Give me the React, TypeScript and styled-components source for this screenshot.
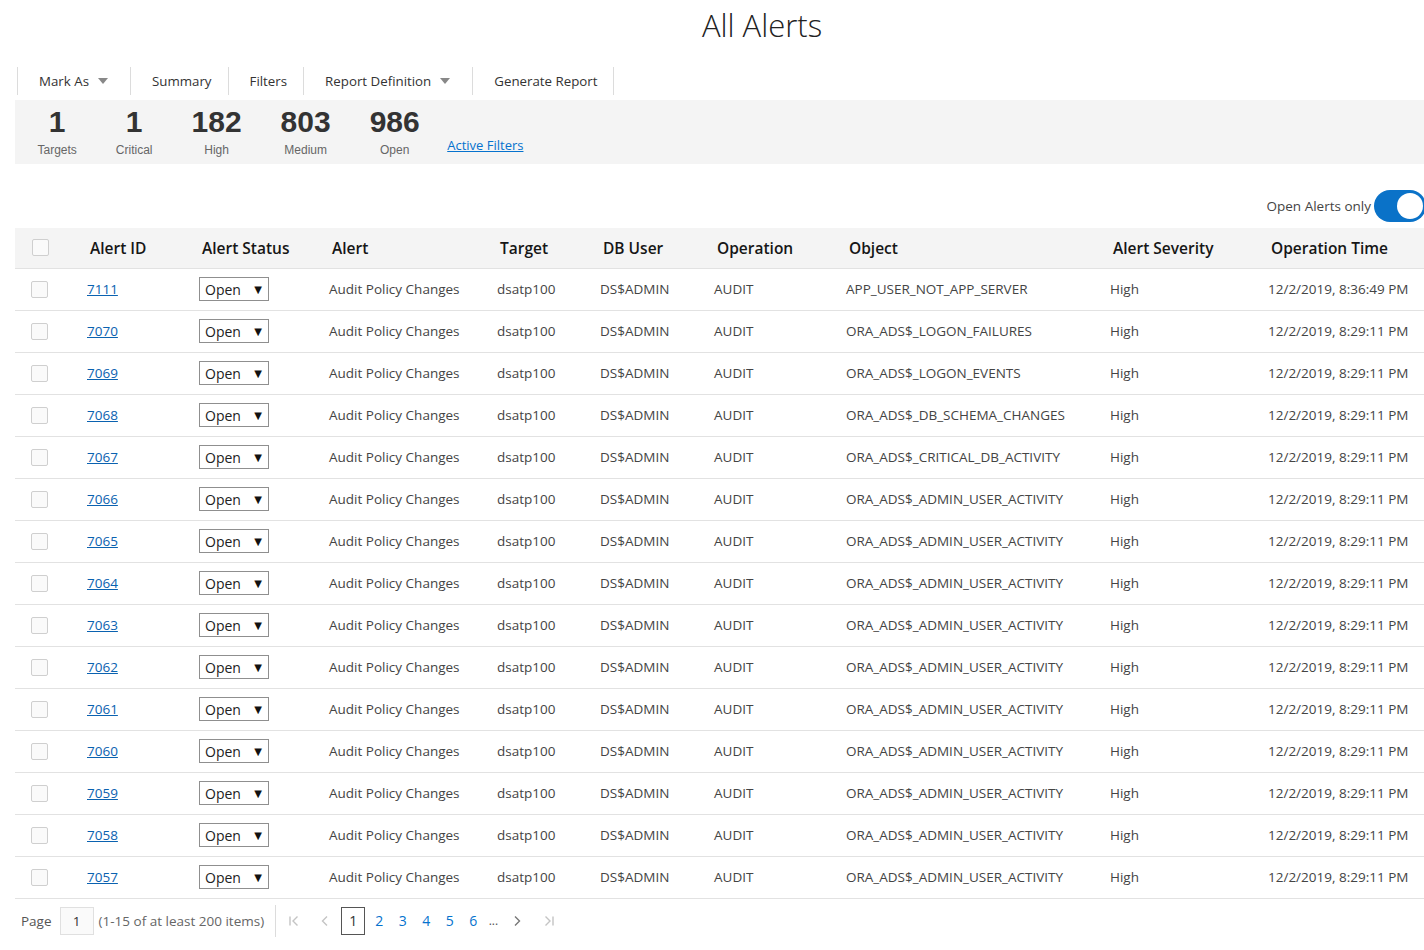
import * as React from 'react';
import styled, { createGlobalStyle } from 'styled-components';

const GlobalStyle = createGlobalStyle`
  html, body {
    margin: 0;
    padding: 0;
    background: #fff;
    overflow: hidden;
  }
  body {
    font-family: "Open Sans", "Noto Sans", "DejaVu Sans", sans-serif;
    color: #333;
  }
`;

const Page = styled.div`
  width: 1524px;
  padding: 0 15px;
  box-sizing: border-box;
`;

const Title = styled.h1`
  margin: 0;
  height: 52px;
  line-height: 50px;
  text-align: center;
  font-size: 31px;
  font-weight: 300;
  color: #222;
`;

const Toolbar = styled.div`
  display: flex;
  align-items: center;
  margin: 15px 0 5px 2px;
  height: 28px;
`;

const ToolItem = styled.div<{ $last?: boolean }>`
  display: flex;
  align-items: center;
  height: 28px;
  padding: 0 16px 0 21px;
  border-left: 1px solid #dcdcdc;
  border-right: ${(p) => (p.$last ? '1px solid #dcdcdc' : 'none')};
  font-size: 13.3px;
  color: #333;
  cursor: pointer;
`;

const Caret = styled.span`
  margin: 0 6px 0 9px;
  width: 0;
  height: 0;
  border-left: 5px solid transparent;
  border-right: 5px solid transparent;
  border-top: 6px solid #888;
`;

const SummaryBand = styled.div`
  display: flex;
  align-items: flex-start;
  height: 64px;
  padding-left: 3px;
  background: #f4f4f4;
`;

const Stat = styled.div`
  display: flex;
  flex-direction: column;
  align-items: center;
  padding: 4px 19.5px 0;
`;

const StatValue = styled.div`
  font-family: "Liberation Sans", Arial, sans-serif;
  font-weight: bold;
  font-size: 30px;
  line-height: 36px;
  color: #333;
`;

const StatLabel = styled.div`
  font-family: "Liberation Sans", Arial, sans-serif;
  font-size: 12px;
  line-height: 14px;
  margin-top: 3px;
  color: #666;
`;

const FilterLink = styled.a`
  margin: 36px 0 0 8px;
  font-size: 13px;
  color: #0572ce;
  text-decoration: underline;
  cursor: pointer;
`;

const ToggleRow = styled.div`
  display: flex;
  justify-content: flex-end;
  align-items: center;
  gap: 3px;
  margin-top: 26px;
  padding-right: 83px;
  height: 32px;
  font-size: 13.5px;
  color: #444;
`;

const Switch = styled.div`
  position: relative;
  width: 52px;
  height: 32px;
  border-radius: 16px;
  background: #0a72c8;
`;

const Knob = styled.span`
  position: absolute;
  top: 3px;
  right: 3px;
  width: 26px;
  height: 26px;
  border-radius: 50%;
  background: #fff;
`;

const Table = styled.table`
  margin-top: 6px;
  border-collapse: collapse;
  table-layout: fixed;
  width: 1421px;
`;

const Th = styled.th<{ $w: number }>`
  width: ${(p) => p.$w}px;
  height: 40px;
  padding: 0 0 0 15px;
  text-align: left;
  font-size: 15.5px;
  font-weight: 600;
  color: #161616;
  background: #f4f4f4;
  border-bottom: 1px solid #e2e2e2;
  white-space: nowrap;
  box-sizing: border-box;
`;

const CheckTh = styled(Th)`
  padding-left: 17px;
`;

const Td = styled.td`
  height: 41px;
  padding: 0 0 0 12px;
  font-size: 13.5px;
  color: #444;
  border-bottom: 1px solid #e2e2e2;
  white-space: nowrap;
`;

const CheckTd = styled(Td)`
  padding-left: 16px;
`;

const Box = styled.span`
  display: block;
  width: 15px;
  height: 15px;
  border: 1px solid #cfcfcf;
  border-radius: 2px;
  background: #fafafa;
`;

const IdLink = styled.a`
  color: #0a62b0;
  text-decoration: underline;
  cursor: pointer;
`;

const StatusSelect = styled.div`
  display: flex;
  align-items: center;
  justify-content: space-between;
  width: 70px;
  height: 24px;
  box-sizing: border-box;
  padding: 0 6px 0 5px;
  border: 1px solid #8f8f8f;
  font-size: 14px;
  color: #222;
  background: #fff;
`;

const SelectArrow = styled.span`
  font-size: 10px;
  color: #111;
`;

const Pager = styled.div`
  display: flex;
  align-items: center;
  height: 44px;
  padding-left: 6px;
  font-size: 13.5px;
  color: #555;
`;

const PageInput = styled.div`
  width: 34px;
  height: 28px;
  margin: 0 5px 0 8px;
  box-sizing: border-box;
  display: flex;
  align-items: center;
  justify-content: center;
  border: 1px solid #e0e0e0;
  background: #fafafa;
  color: #333;
`;

const PagerInfo = styled.span`
  color: #666;
  padding-right: 11px;
  border-right: 1px solid #dcdcdc;
  line-height: 32px;
`;

const NavIcon = styled.span<{ $disabled?: boolean; $gap: number }>`
  display: flex;
  align-items: center;
  justify-content: center;
  width: 12px;
  height: 28px;
  margin-left: ${(p) => p.$gap}px;
  color: ${(p) => (p.$disabled ? '#c4c4c4' : '#777')};
`;

const CurrentPage = styled.span`
  display: flex;
  align-items: center;
  justify-content: center;
  width: 24px;
  height: 28px;
  box-sizing: border-box;
  margin: 0 6px 0 10px;
  border: 1px solid #555;
  color: #333;
  font-size: 14px;
`;

const PageNum = styled.span`
  display: flex;
  align-items: center;
  justify-content: center;
  width: 16px;
  height: 28px;
  margin-right: 7.5px;
  color: #0572ce;
  font-size: 14px;
`;

const Ellipsis = styled.span`
  width: 10px;
  font-size: 12px;
  color: #555;
`;

const columns = [
  { key: 'check', label: '', w: 60 },
  { key: 'id', label: 'Alert ID', w: 112 },
  { key: 'status', label: 'Alert Status', w: 130 },
  { key: 'alert', label: 'Alert', w: 168 },
  { key: 'target', label: 'Target', w: 103 },
  { key: 'user', label: 'DB User', w: 114 },
  { key: 'op', label: 'Operation', w: 132 },
  { key: 'object', label: 'Object', w: 264 },
  { key: 'severity', label: 'Alert Severity', w: 158 },
  { key: 'time', label: 'Operation Time', w: 180 },
];

const rows = [
  { id: '7111', object: 'APP_USER_NOT_APP_SERVER', time: '12/2/2019, 8:36:49 PM' },
  { id: '7070', object: 'ORA_ADS$_LOGON_FAILURES', time: '12/2/2019, 8:29:11 PM' },
  { id: '7069', object: 'ORA_ADS$_LOGON_EVENTS', time: '12/2/2019, 8:29:11 PM' },
  { id: '7068', object: 'ORA_ADS$_DB_SCHEMA_CHANGES', time: '12/2/2019, 8:29:11 PM' },
  { id: '7067', object: 'ORA_ADS$_CRITICAL_DB_ACTIVITY', time: '12/2/2019, 8:29:11 PM' },
  ...['7066', '7065', '7064', '7063', '7062', '7061', '7060', '7059', '7058', '7057'].map((id) => ({
    id,
    object: 'ORA_ADS$_ADMIN_USER_ACTIVITY',
    time: '12/2/2019, 8:29:11 PM',
  })),
];

const stats = [
  { value: '1', label: 'Targets' },
  { value: '1', label: 'Critical' },
  { value: '182', label: 'High' },
  { value: '803', label: 'Medium' },
  { value: '986', label: 'Open' },
];

const FirstIcon = () => (
  <svg width="12" height="12" viewBox="0 0 12 12" fill="none" stroke="currentColor" strokeWidth="1.4">
    <path d="M2 1.5v9M9.5 1.5L5 6l4.5 4.5" />
  </svg>
);

const PrevIcon = () => (
  <svg width="12" height="12" viewBox="0 0 12 12" fill="none" stroke="currentColor" strokeWidth="1.4">
    <path d="M8 1.5L3.5 6 8 10.5" />
  </svg>
);

const NextIcon = () => (
  <svg width="12" height="12" viewBox="0 0 12 12" fill="none" stroke="currentColor" strokeWidth="1.4">
    <path d="M4 1.5L8.5 6 4 10.5" />
  </svg>
);

const LastIcon = () => (
  <svg width="12" height="12" viewBox="0 0 12 12" fill="none" stroke="currentColor" strokeWidth="1.4">
    <path d="M2.5 1.5L7 6l-4.5 4.5M10 1.5v9" />
  </svg>
);

export default function App() {
  return (
    <Page>
      <GlobalStyle />
      <Title>All Alerts</Title>

      <Toolbar>
        <ToolItem>
          Mark As <Caret />
        </ToolItem>
        <ToolItem>Summary</ToolItem>
        <ToolItem>Filters</ToolItem>
        <ToolItem>
          Report Definition <Caret />
        </ToolItem>
        <ToolItem $last>Generate Report</ToolItem>
      </Toolbar>

      <SummaryBand>
        {stats.map((s) => (
          <Stat key={s.label}>
            <StatValue>{s.value}</StatValue>
            <StatLabel>{s.label}</StatLabel>
          </Stat>
        ))}
        <FilterLink>Active Filters</FilterLink>
      </SummaryBand>

      <ToggleRow>
        Open Alerts only
        <Switch>
          <Knob />
        </Switch>
      </ToggleRow>

      <Table>
        <thead>
          <tr>
            {columns.map((c) =>
              c.key === 'check' ? (
                <CheckTh key={c.key} $w={c.w}>
                  <Box />
                </CheckTh>
              ) : (
                <Th key={c.key} $w={c.w}>
                  {c.label}
                </Th>
              )
            )}
          </tr>
        </thead>
        <tbody>
          {rows.map((r) => (
            <tr key={r.id}>
              <CheckTd>
                <Box />
              </CheckTd>
              <Td>
                <IdLink>{r.id}</IdLink>
              </Td>
              <Td>
                <StatusSelect>
                  Open <SelectArrow>▼</SelectArrow>
                </StatusSelect>
              </Td>
              <Td>Audit Policy Changes</Td>
              <Td>dsatp100</Td>
              <Td>DS$ADMIN</Td>
              <Td>AUDIT</Td>
              <Td>{r.object}</Td>
              <Td>High</Td>
              <Td>{r.time}</Td>
            </tr>
          ))}
        </tbody>
      </Table>

      <Pager>
        Page
        <PageInput>1</PageInput>
        <PagerInfo>(1-15 of at least 200 items)</PagerInfo>
        <NavIcon $disabled $gap={12}>
          <FirstIcon />
        </NavIcon>
        <NavIcon $disabled $gap={19}>
          <PrevIcon />
        </NavIcon>
        <CurrentPage>1</CurrentPage>
        {['2', '3', '4', '5', '6'].map((n) => (
          <PageNum key={n}>{n}</PageNum>
        ))}
        <Ellipsis>...</Ellipsis>
        <NavIcon $gap={12}>
          <NextIcon />
        </NavIcon>
        <NavIcon $disabled $gap={20}>
          <LastIcon />
        </NavIcon>
      </Pager>
    </Page>
  );
}
